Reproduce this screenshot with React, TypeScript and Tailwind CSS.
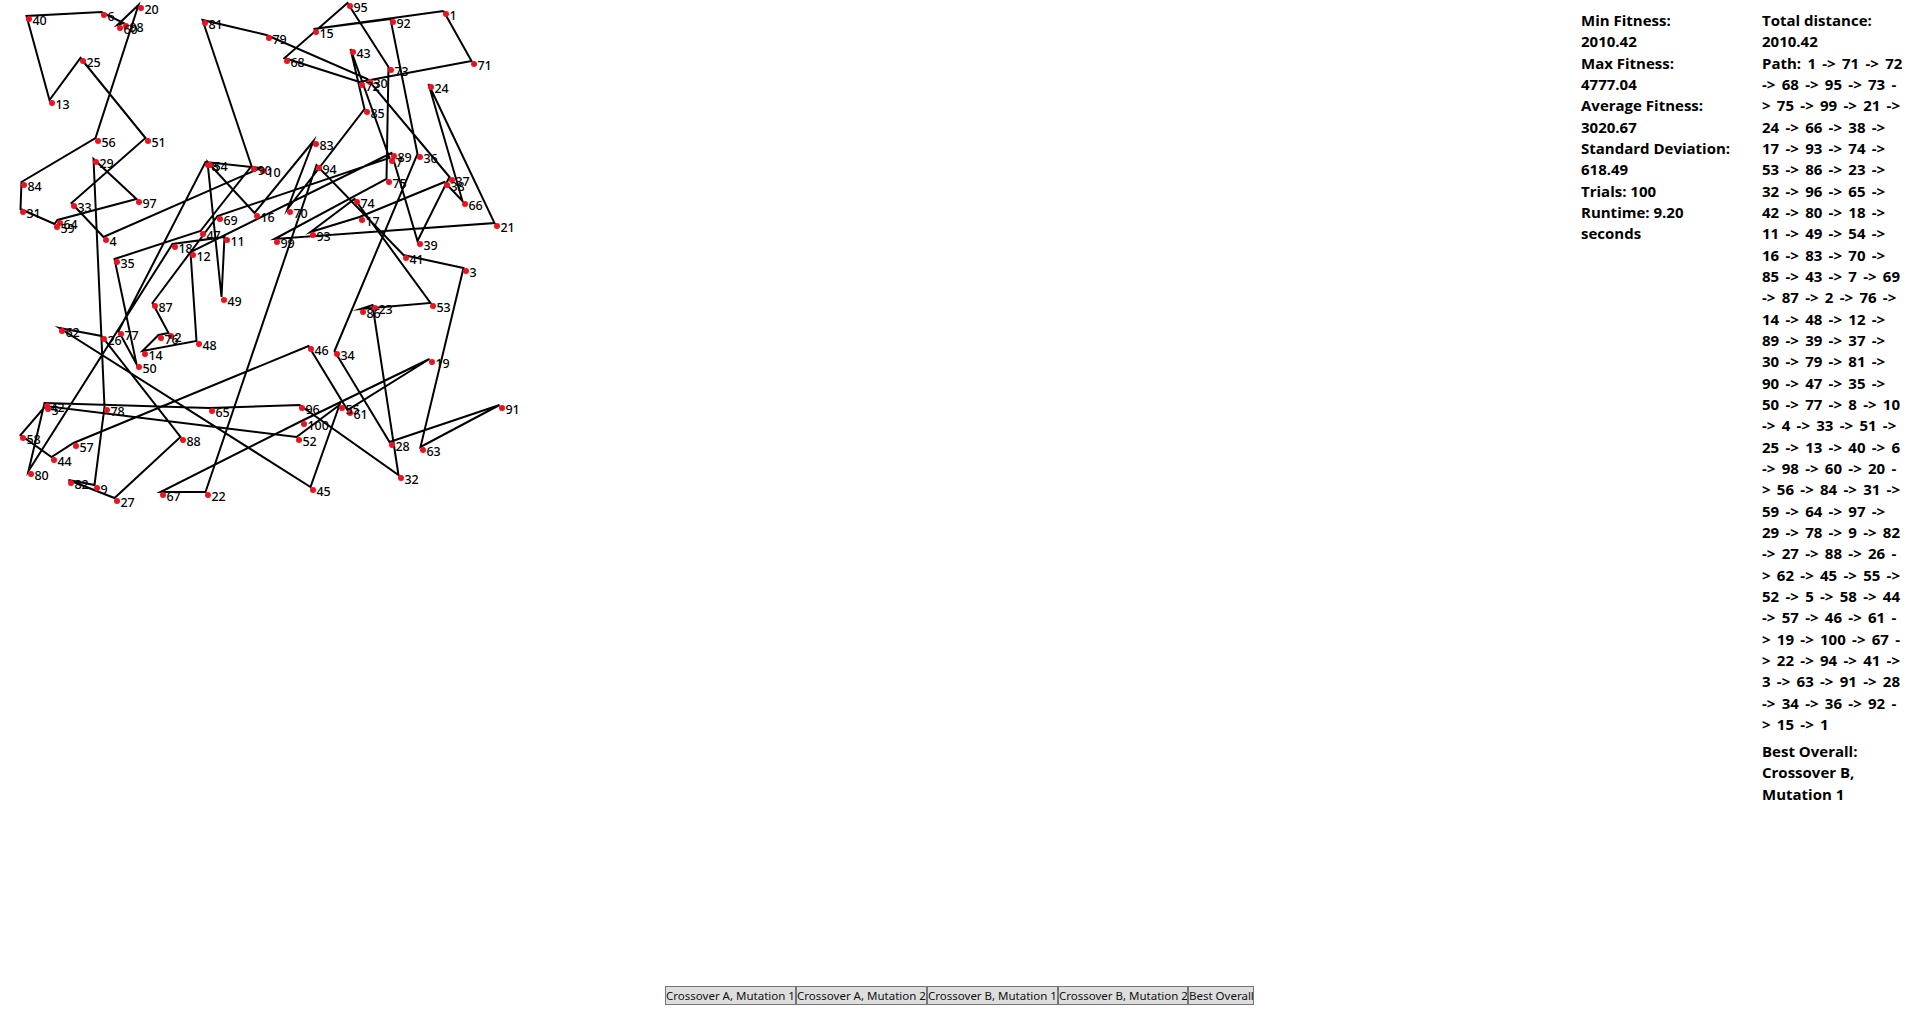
const nodes: Record<number, [number, number]> = {
  1: [446, 14], 2: [171, 336], 3: [466, 271], 4: [106, 240], 5: [48, 409], 6: [104, 15], 7: [392, 161], 8: [208, 165], 9: [97, 488], 10: [263, 171],
  11: [227, 240], 12: [193, 255], 13: [52, 103], 14: [145, 354], 15: [316, 32], 16: [257, 216], 17: [362, 220], 18: [175, 247], 19: [432, 362], 20: [141, 8],
  21: [497, 226], 22: [208, 495], 23: [375, 308], 24: [431, 87], 25: [83, 61], 26: [104, 339], 27: [117, 501], 28: [392, 445], 29: [96, 162], 30: [370, 82],
  31: [23, 212], 32: [401, 478], 33: [74, 206], 34: [337, 354], 35: [117, 262], 36: [420, 157], 37: [452, 180], 38: [447, 185], 39: [420, 244], 40: [29, 19],
  41: [406, 258], 42: [47, 406], 43: [353, 52], 44: [54, 460], 45: [313, 490], 46: [311, 349], 47: [203, 234], 48: [199, 344], 49: [224, 300], 50: [139, 367],
  51: [148, 141], 52: [299, 440], 53: [433, 306], 54: [210, 165], 55: [342, 408], 56: [98, 141], 57: [76, 446], 58: [23, 438], 59: [57, 227], 60: [120, 28],
  61: [350, 413], 62: [62, 331], 63: [423, 450], 64: [60, 223], 65: [212, 411], 66: [465, 204], 67: [163, 495], 68: [287, 61], 69: [220, 219], 70: [290, 212],
  71: [474, 64], 72: [362, 85], 73: [391, 70], 74: [357, 202], 75: [389, 182], 76: [161, 338], 77: [121, 334], 78: [107, 410], 79: [269, 38], 80: [31, 474],
  81: [205, 23], 82: [71, 483], 83: [316, 144], 84: [24, 185], 85: [367, 112], 86: [363, 312], 87: [155, 306], 88: [183, 440], 89: [394, 156], 90: [254, 169],
  91: [502, 408], 92: [393, 22], 93: [313, 235], 94: [319, 168], 95: [350, 6], 96: [302, 408], 97: [139, 202], 98: [126, 26], 99: [277, 242], 100: [304, 424],
}

const path = [
  1, 71, 72, 68, 95, 73, 75, 99, 21, 24, 66, 38, 17, 93, 74, 53, 86, 23, 32, 96, 65, 42, 80, 18, 11, 49, 54, 16, 83, 70, 85, 43, 7, 69, 87, 2, 76, 14, 48, 12,
  89, 39, 37, 30, 79, 81, 90, 47, 35, 50, 77, 8, 10, 4, 33, 51, 25, 13, 40, 6, 98, 60, 20, 56, 84, 31, 59, 64, 97, 29, 78, 9, 82, 27, 88, 26, 62, 45, 55, 52,
  5, 58, 44, 57, 46, 61, 19, 100, 67, 22, 94, 41, 3, 63, 91, 28, 34, 36, 92, 15, 1,
]

const statLines = [
  'Min Fitness:', '2010.42', 'Max Fitness:', '4777.04', 'Average Fitness:', '3020.67',
  'Standard Deviation:', '618.49', 'Trials: 100', 'Runtime: 9.20', 'seconds',
]

const pathLines = [
  'Path: 1 -> 71 -> 72', '-> 68 -> 95 -> 73 -', '> 75 -> 99 -> 21 ->', '24 -> 66 -> 38 ->', '17 -> 93 -> 74 ->',
  '53 -> 86 -> 23 ->', '32 -> 96 -> 65 ->', '42 -> 80 -> 18 ->', '11 -> 49 -> 54 ->', '16 -> 83 -> 70 ->', '85 -> 43 -> 7 -> 69', '-> 87 -> 2 -> 76 ->',
  '14 -> 48 -> 12 ->', '89 -> 39 -> 37 ->', '30 -> 79 -> 81 ->', '90 -> 47 -> 35 ->', '50 -> 77 -> 8 -> 10', '-> 4 -> 33 -> 51 ->', '25 -> 13 -> 40 -> 6',
  '-> 98 -> 60 -> 20 -', '> 56 -> 84 -> 31 ->', '59 -> 64 -> 97 ->', '29 -> 78 -> 9 -> 82', '-> 27 -> 88 -> 26 -', '> 62 -> 45 -> 55 ->', '52 -> 5 -> 58 -> 44',
  '-> 57 -> 46 -> 61 -', '> 19 -> 100 -> 67 -', '> 22 -> 94 -> 41 ->', '3 -> 63 -> 91 -> 28', '-> 34 -> 36 -> 92 -', '> 15 -> 1',
]

const tabs = [
  { label: 'Crossover A, Mutation 1', width: 'w-[131px]' },
  { label: 'Crossover A, Mutation 2', width: 'w-[131px]' },
  { label: 'Crossover B, Mutation 1', width: 'w-[131px]' },
  { label: 'Crossover B, Mutation 2', width: 'w-[130px]' },
  { label: 'Best Overall', width: 'w-[66px]' },
]

const TourGraph = () => {
  // lines sit slightly up and left of the dots in the original canvas
  const points = path.map((id) => `${nodes[id][0] - 2.5},${nodes[id][1] - 3}`).join(' ')
  return (
    <svg width="530" height="510" className="block shrink-0">
      <polyline points={points} fill="none" stroke="#000" strokeWidth="2" strokeLinejoin="miter" strokeMiterlimit="10" />
      {Object.entries(nodes).map(([id, [x, y]]) => (
        <circle key={id} cx={x} cy={y} r="3" fill="#ee1122" />
      ))}
      {Object.entries(nodes).map(([id, [x, y]]) => (
        <text key={id} x={x + 3.4} y={y + 5.5} fontSize="12.5" fill="#000" className="font-medium font-['Noto_Sans',sans-serif]">
          {id}
        </text>
      ))}
    </svg>
  )
}

export default function App() {
  return (
    <div className="flex h-screen w-full flex-col overflow-hidden bg-white pb-[10px] text-black font-['Open_Sans',sans-serif]">
      <div className="flex flex-1 justify-between">
        <TourGraph />
        <div className="flex pt-[10px] text-[15px] leading-[21.33px] font-bold whitespace-nowrap">
          <div className="w-[181px]">
            {statLines.map((line, i) => (
              <div key={i}>{line}</div>
            ))}
          </div>
          <div className="w-[157px]">
            <div>Total distance:</div>
            <div>2010.42</div>
            {pathLines.map((line, i) => (
              <div key={i} className="[word-spacing:2.4px]">
                {line}
              </div>
            ))}
            <div className="mt-[6px]">
              <div>Best Overall:</div>
              <div>Crossover B,</div>
              <div>Mutation 1</div>
            </div>
          </div>
        </div>
      </div>
      <div className="flex justify-center">
        {tabs.map((tab) => (
          <button
            key={tab.label}
            className={`${tab.width} h-[19px] overflow-hidden border border-[#767676] bg-[#dedede] text-center text-[11.5px] leading-[16px] whitespace-nowrap text-[#111] font-['Noto_Sans',sans-serif]`}
          >
            {tab.label}
          </button>
        ))}
      </div>
    </div>
  )
}
